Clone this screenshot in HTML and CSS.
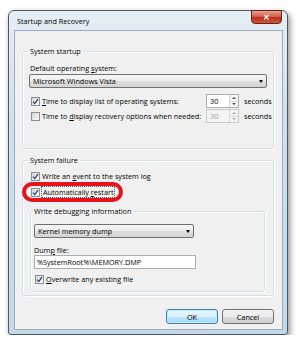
FILE: index.html
```html
<!DOCTYPE html>
<html lang="en">
<head>
    <meta charset="UTF-8">
    <title>Startup and Recovery</title>
    <link rel="stylesheet" href="styles.css">
</head>
<body>
    <div class="window">
        <div class="titlebar">
            <span class="title">Startup and Recovery</span>
            <span class="close">&#x2715;</span>
        </div>
        <div class="client">
            <fieldset class="group startup">
                <legend>System startup</legend>
                <div class="label">Default operating <u>s</u>ystem:</div>
                <div class="combo">Microsoft Windows Vista<span class="arrow"></span></div>
                <div class="row timed first">
                    <span class="check">
                        <svg width="7" height="7" viewBox="0 0 7 7"><path d="M1 3.6 L2.8 5.6 L6 1.2" fill="none" stroke="#1f3a7a" stroke-width="1.2"/></svg>
                    </span>
                    <span class="text"><u>T</u>ime to display list of operating systems:</span>
                    <span class="spin"><span class="value">30</span><span class="arrows"><i class="up"></i><i class="down"></i></span></span>
                    <span class="unit">seconds</span>
                </div>
                <div class="row timed">
                    <span class="check"></span>
                    <span class="text">Time to <u>d</u>isplay recovery options when needed:</span>
                    <span class="spin disabled"><span class="value">30</span><span class="arrows"><i class="up"></i><i class="down"></i></span></span>
                    <span class="unit">seconds</span>
                </div>
            </fieldset>

            <fieldset class="group failure">
                <legend>System failure</legend>
                <div class="row">
                    <span class="check">
                        <svg width="7" height="7" viewBox="0 0 7 7"><path d="M1 3.6 L2.8 5.6 L6 1.2" fill="none" stroke="#1f3a7a" stroke-width="1.2"/></svg>
                    </span>
                    <span class="text">Write an <u>e</u>vent to the system log</span>
                </div>
                <div class="row restart">
                    <span class="check">
                        <svg width="7" height="7" viewBox="0 0 7 7"><path d="M1 3.6 L2.8 5.6 L6 1.2" fill="none" stroke="#1f3a7a" stroke-width="1.2"/></svg>
                    </span>
                    <span class="text">Automatically <u>r</u>estart</span>
                    <span class="highlight"></span>
                </div>

                <fieldset class="group debug">
                    <legend>Write debugging information</legend>
                    <div class="combo small">Kernel memory dump<span class="arrow"></span></div>
                    <div class="label dump">Dum<u>p</u> file:</div>
                    <div class="textbox">%SystemRoot%\MEMORY.DMP</div>
                    <div class="row overwrite">
                        <span class="check">
                            <svg width="7" height="7" viewBox="0 0 7 7"><path d="M1 3.6 L2.8 5.6 L6 1.2" fill="none" stroke="#1f3a7a" stroke-width="1.2"/></svg>
                        </span>
                        <span class="text"><u>O</u>verwrite any existing file</span>
                    </div>
                </fieldset>
            </fieldset>

            <div class="buttons">
                <button class="btn default">OK</button>
                <button class="btn">Cancel</button>
            </div>
        </div>
    </div>
</body>
</html>
```

FILE: styles.css
```css
body {
    margin: 0;
    padding: 10px 0 0 8px;
    background: #fff;
    font-family: "Open Sans", "Noto Sans", sans-serif;
    font-size: 7.25px;
    color: #000;
}

u {
    text-decoration-thickness: 1px;
    text-underline-offset: 1px;
}

/* Window frame */
.window {
    width: 269px;
    border: 1px solid #4a5866;
    border-radius: 6px 6px 3px 3px;
    padding: 0 4px 4px 5px;
    background: linear-gradient(#e6eef5, #d2e1ec 30%, #c4d8e7);
    box-shadow: 2px 3px 6px rgba(0, 0, 0, 0.45);
}

.titlebar {
    display: flex;
    align-items: flex-start;
    height: 19px;
    margin: 0 -4px 0 -5px;
    padding-left: 8px;
}

.title {
    flex: 1;
    line-height: 20px;
}

.close {
    width: 29px;
    height: 12px;
    margin: -1px 5px 0 0;
    border: 1px solid #6b2016;
    border-radius: 0 0 4px 4px;
    background: linear-gradient(#e8a08e, #d2624c 45%, #b8321f 55%, #c9553c);
    color: #fff;
    font-size: 8px;
    font-weight: bold;
    line-height: 12px;
    text-align: center;
}

.client {
    border: 1px solid #9aacbd;
    background: #f0f0f0;
    padding-bottom: 5px;
}

/* Group boxes */
.group {
    min-width: 0;
    border: 1px solid #d5dfe5;
    border-radius: 3px;
    box-shadow: inset 1px 1px 0 #fff, 1px 1px 0 #fff;
}

.group legend {
    padding: 0 2px;
    margin-left: -1px;
    line-height: 10px;
}

.startup {
    margin: 15px 8px 0 7px;
    padding: 0 6px 25px 6px;
}

.failure {
    margin: 6px 8px 0 7px;
    padding: 4px 6px 3px 6px;
}

.debug {
    margin: 7px 2px 0 1px;
    padding: 0 0 5px 3px;
}

.debug legend {
    margin-left: -2px;
}

.label {
    line-height: 10px;
    padding-left: 1px;
}

.startup .label {
    margin-top: 7px;
}

/* Drop-down lists */
.combo {
    position: relative;
    height: 14px;
    box-sizing: border-box;
    border: 1px solid #707070;
    border-radius: 2px;
    background: linear-gradient(#f6f6f6, #ececec 50%, #dedede 50%, #d4d4d4);
    padding-left: 3px;
    line-height: 12px;
    margin-top: 1px;
}

.combo .arrow {
    position: absolute;
    right: 3px;
    top: 5px;
    border-left: 2.5px solid transparent;
    border-right: 2.5px solid transparent;
    border-top: 3px solid #000;
}

.combo.small {
    width: 160px;
    margin-top: 8px;
}

/* Checkbox rows */
.row {
    display: flex;
    align-items: center;
    height: 14px;
    padding-left: 2px;
}

.row + .row {
    margin-top: 2px;
}

.timed {
    margin-right: -6px;
}

.timed.first {
    margin-top: 6px;
}

.timed + .timed {
    margin-top: 1px;
}

.check {
    width: 9px;
    height: 9px;
    box-sizing: border-box;
    border: 1px solid #8e8f8f;
    background: linear-gradient(135deg, #d6d6d6, #fbfbfb);
    margin-right: 2px;
    display: flex;
    align-items: center;
    justify-content: center;
    flex-shrink: 0;
}

.text {
    flex: 1;
    white-space: nowrap;
}

.restart {
    position: relative;
}

.restart .text {
    flex: none;
    outline: 1px dotted #555;
    line-height: 10px;
    padding: 0 1px;
}

/* red marker drawn over the screenshot */
.highlight {
    position: absolute;
    left: -7px;
    top: -3px;
    width: 93px;
    height: 12px;
    border: 4px solid #e3141c;
    border-radius: 11px;
}

/* Spin boxes */
.spin {
    display: flex;
    width: 33px;
    height: 14px;
    box-sizing: border-box;
    border: 1px solid #abadb3;
    background: #fff;
    margin-right: 5px;
}

.spin .value {
    flex: 1;
    padding-left: 3px;
    line-height: 12px;
}

.spin .arrows {
    width: 8px;
    display: flex;
    flex-direction: column;
    border-left: 1px solid #d8d8d8;
    background: #f3f3f3;
}

.spin .arrows i {
    flex: 1;
    display: flex;
    align-items: center;
    justify-content: center;
}

.spin .arrows i::after {
    content: '';
    border-left: 2px solid transparent;
    border-right: 2px solid transparent;
}

.spin .up::after {
    border-bottom: 2px solid #555;
}

.spin .down {
    border-top: 1px solid #d8d8d8;
}

.spin .down::after {
    border-top: 2px solid #555;
}

.spin.disabled {
    border-color: #c9c9c9;
    background: #f4f4f4;
    color: #a0a0a0;
}

.spin.disabled .arrows i::after {
    border-top-color: #b0b0b0;
    border-bottom-color: #b0b0b0;
}

.unit {
    width: 29px;
}

/* Dump file */
.dump {
    margin-top: 7px;
    padding-left: 0;
}

.textbox {
    width: 162px;
    height: 14px;
    box-sizing: border-box;
    border: 1px solid #abadb3;
    background: #fff;
    padding-left: 2px;
    line-height: 12px;
}

.overwrite {
    margin-top: 3px;
    padding-left: 1px;
}

/* Dialog buttons */
.buttons {
    display: flex;
    justify-content: flex-end;
    gap: 4px;
    margin: 13px 8px 0 0;
}

.btn {
    width: 52px;
    height: 15px;
    padding: 0;
    border: 1px solid #707070;
    border-radius: 3px;
    background: linear-gradient(#f2f2f2, #ebebeb 50%, #dddddd 50%, #cfcfcf);
    font: inherit;
    color: #000;
}

.btn.default {
    border-color: #3c7fb1;
    background: linear-gradient(#eaf6fd, #d9f0fc 50%, #bee6fd 50%, #a7d9f5);
    box-shadow: inset 0 0 0 1px #c5e8fb;
}
```
